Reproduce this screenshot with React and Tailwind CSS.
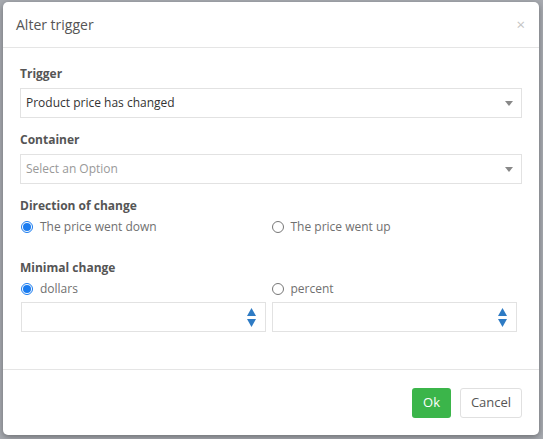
import React from "react";

const FONT = { fontFamily: '"Open Sans", "Noto Sans", Arial, sans-serif' };

function Radio({ checked, label }) {
  return (
    <label className="flex items-center h-[18px] text-[12px] text-[#707070]">
      {checked ? (
        <span className="w-[12px] h-[12px] rounded-full border-[1px] border-[#1a7cf0] flex items-center justify-center">
          <span className="w-[8px] h-[8px] rounded-full bg-[#1a7cf0]" />
        </span>
      ) : (
        <span className="w-[12px] h-[12px] rounded-full border-[1px] border-[#777]" />
      )}
      <span className="ml-[7px]">{label}</span>
    </label>
  );
}

function Select({ value, placeholder }) {
  return (
    <div className="h-[30px] border border-[#e2e2e2] flex items-center justify-between pl-[5px] pr-[8px]">
      <span className={"text-[12px] " + (value ? "text-[#333]" : "text-[#999]")}>
        {value || placeholder}
      </span>
      <svg width="8" height="5" viewBox="0 0 8 5">
        <path d="M0 0 L8 0 L4 5 Z" fill="#888" />
      </svg>
    </div>
  );
}

function NumberInput() {
  return (
    <div className="w-[245px] h-[30px] border border-[#e2e2e2] flex items-center justify-end pr-[9px]">
      <div className="flex flex-col items-center gap-[3px]">
        <svg width="9" height="8" viewBox="0 0 9 8">
          <path d="M4.5 0 L9 8 L0 8 Z" fill="#2e7bc4" />
        </svg>
        <svg width="9" height="8" viewBox="0 0 9 8">
          <path d="M0 0 L9 0 L4.5 8 Z" fill="#2e7bc4" />
        </svg>
      </div>
    </div>
  );
}

export default function App() {
  return (
    <div className="w-[543px] h-[439px] bg-[#a7aab0] pl-[3px] pt-[2px]" style={FONT}>
      <div className="w-[536px] h-[433px] bg-white rounded-[5px] shadow-[0_2px_6px_rgba(0,0,0,0.35)] flex flex-col">
        {/* HEADER */}
        <div className="h-[46px] border-b border-[#e5e5e5] flex items-center justify-between pl-[13px] pr-[14px]">
          <span className="text-[14px] text-[#555]">Alter trigger</span>
          <span className="text-[15px] text-[#c4c4c4] leading-none">×</span>
        </div>

        {/* BODY */}
        <div className="flex-1 px-[17px] pt-[17px]">
          <div className="text-[12px] font-bold text-[#555] h-[18px] leading-[18px] mb-[5px]">Trigger</div>
          <Select value="Product price has changed" />

          <div className="text-[12px] font-bold text-[#555] h-[18px] leading-[18px] mt-[13px] mb-[5px]">Container</div>
          <Select placeholder="Select an Option" />

          <div className="text-[12px] font-bold text-[#555] h-[18px] leading-[18px] mt-[13px] mb-[3px]">Direction of change</div>
          <div className="grid grid-cols-2 pl-[1px]">
            <Radio checked label="The price went down" />
            <Radio label="The price went up" />
          </div>

          <div className="text-[12px] font-bold text-[#555] h-[18px] leading-[18px] mt-[23px] mb-[3px]">Minimal change</div>
          <div className="grid grid-cols-2 pl-[1px]">
            <Radio checked label="dollars" />
            <Radio label="percent" />
          </div>
          <div className="flex gap-[6px] pl-[1px] mt-[4px]">
            <NumberInput />
            <NumberInput />
          </div>
        </div>

        {/* FOOTER */}
        <div className="h-[66px] border-t border-[#e5e5e5] flex items-center justify-end gap-[9px] pr-[17px]">
          <button className="w-[39px] h-[30px] rounded-[3px] bg-[#3bb54a] text-white text-[13px]">Ok</button>
          <button className="w-[62px] h-[30px] rounded-[3px] border border-[#e0e0e0] bg-white text-[#555] text-[13px]">Cancel</button>
        </div>
      </div>
    </div>
  );
}
